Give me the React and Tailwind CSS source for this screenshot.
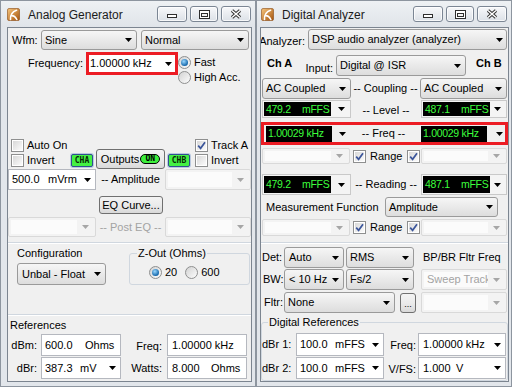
import React from "react";

const Arrow = ({ gray }) => (
  <svg width="7" height="4" viewBox="0 0 7 4" className="shrink-0">
    <path d="M0 0H7L3.5 4Z" fill={gray ? "#a6a6a6" : "#000"} />
  </svg>
);

// gray dropdown-list combo (Win7 look)
function Combo({ className = "", children, pad = "pl-[3px]", arrowGap = "mr-[4px]" }) {
  return (
    <div
      className={`flex items-center shrink-0 border border-[#9a9a9a] rounded-[3px] bg-linear-to-b from-[#f6f6f6] to-[#dddddd] ${className}`}
    >
      <div className={`flex-1 whitespace-pre overflow-hidden ${pad}`}>{children}</div>
      <span className={arrowGap}>
        <Arrow />
      </span>
    </div>
  );
}

// white edit field, optional dropdown arrow
function Field({ className = "", children, arrow }) {
  return (
    <div className={`flex items-center shrink-0 h-full border border-[#b5b8bf] bg-white pl-[3px] ${className}`}>
      <div className="flex-1 flex whitespace-pre overflow-hidden">{children}</div>
      {arrow && (
        <span className="mr-[4px]">
          <Arrow />
        </span>
      )}
    </div>
  );
}

function Dis({ className = "", children }) {
  return (
    <div className={`flex items-stretch shrink-0 border border-[#d9d9d9] bg-[#f3f3f3] rounded-[2px] p-[2px] ${className}`}>
      <div className="flex-1 bg-[#fbfbfb] text-[#a3a3a3] pl-[3px] flex items-center whitespace-pre overflow-hidden">
        {children}
      </div>
      <span className="w-[16px] flex items-center justify-center">
        <Arrow gray />
      </span>
    </div>
  );
}

function Lcd({ v, u, className = "" }) {
  return (
    <div
      className={`bg-black text-[#3dff3d] text-[10.5px] flex items-center pl-[2px] whitespace-pre shrink-0 overflow-hidden tracking-[-0.3px] ${className}`}
    >
      {u !== undefined ? (
        <>
          <span className="w-[36px]">{v}</span>
          <span>{u}</span>
        </>
      ) : (
        v
      )}
    </div>
  );
}

function LcdCombo({ v, u, className = "" }) {
  return (
    <div className={`flex items-stretch shrink-0 border border-[#c9c9c9] bg-[#f4f4f4] p-[1px] ${className}`}>
      <Lcd v={v} u={u} className="w-[67px]" />
      <span className="ml-auto mr-[4px] flex items-center">
        <Arrow />
      </span>
    </div>
  );
}

function Check({ checked, className = "" }) {
  return (
    <span className={`w-[13px] h-[13px] shrink-0 border border-[#8e8f8f] bg-white p-[1px] flex ${className}`}>
      <span className="flex-1 bg-linear-to-br from-[#d8d8d8] to-[#fbfbfb] flex items-center justify-center">
        {checked && (
          <svg width="9" height="9" viewBox="0 0 9 9">
            <path d="M1.2 4.6L3.6 7.3L8 1.3" fill="none" stroke="#3b559a" strokeWidth="1.7" />
          </svg>
        )}
      </span>
    </span>
  );
}

function Radio({ checked, label, className = "" }) {
  return (
    <div className={`flex items-center ${className}`}>
      <span className="w-[13px] h-[13px] shrink-0 rounded-full border border-[#8e8f8f] bg-linear-to-br from-[#d2d2d2] to-[#fdfdfd] flex items-center justify-center">
        {checked && (
          <span className="w-[7px] h-[7px] rounded-full bg-[radial-gradient(circle_at_40%_35%,#9ad8ff,#0b5fa5_75%)]" />
        )}
      </span>
      <span className="ml-[3px]">{label}</span>
    </div>
  );
}

function Btn({ className = "", children }) {
  return (
    <div
      className={`flex items-center justify-center shrink-0 border border-[#707070] rounded-[3px] bg-linear-to-b from-[#f3f3f3] via-[#ebebeb] to-[#d9d9d9] ${className}`}
    >
      {children}
    </div>
  );
}

function Badge({ children, className = "" }) {
  return (
    <span
      className={`w-[22px] h-[13px] shrink-0 border border-[#2f4f8f] rounded-[2px] bg-[#44f044] flex items-center justify-center text-[8px] leading-none font-bold font-['DejaVu_Sans_Mono',monospace] text-[#062806] shadow-[0_0_0_1px_#b9c8e0] ${className}`}
    >
      {children}
    </span>
  );
}

const AppIcon = () => (
  <svg width="13" height="13" viewBox="0 0 13 13" className="shrink-0">
    <defs>
      <linearGradient id="appg" x1="0" y1="0" x2="1" y2="1">
        <stop offset="0" stopColor="#f8c77e" />
        <stop offset="1" stopColor="#a4520c" />
      </linearGradient>
    </defs>
    <rect x="0.5" y="0.5" width="12" height="12" rx="1.5" fill="url(#appg)" stroke="#8a4a10" strokeWidth="0.6" />
    <path d="M3.5 11.5C3.2 7 4.5 4 9.5 2.2M4.5 7.6C6.8 7.6 8.6 9 9.8 11.5" stroke="#fff" strokeWidth="1.6" fill="none" strokeLinecap="round" />
  </svg>
);

function TBtn({ className = "", children }) {
  return (
    <div
      className={`h-[16px] flex items-center justify-center border border-[#7b8694] rounded-[3px] bg-linear-to-b from-[#f7f8fa] to-[#dce1e7] shadow-[inset_0_0_0_1px_rgba(255,255,255,0.75)] ${className}`}
    >
      {children}
    </div>
  );
}

function TitleBar({ title, pl }) {
  return (
    <div className={`h-[26px] shrink-0 flex items-center pr-[4px] bg-linear-to-b from-[#eef1f4] to-[#e0e4e9] ${pl}`}>
      <AppIcon />
      <span className="ml-[8px] text-[12px] leading-[14px] text-[#1b1b1b] mt-[1px]">{title}</span>
      <div className="ml-auto flex gap-[3px]">
        <TBtn className="w-[30px] items-end pb-[3px]">
          <svg width="10" height="4" viewBox="0 0 10 4">
            <rect x="0.5" y="0.5" width="9" height="3" fill="#fff" stroke="#2e2e2e" />
          </svg>
        </TBtn>
        <TBtn className="w-[28px]">
          <svg width="11" height="9" viewBox="0 0 11 9">
            <rect x="0.5" y="0.5" width="10" height="8" fill="#fff" stroke="#2e2e2e" />
            <rect x="2.5" y="3.5" width="6" height="3" fill="#f3f3f3" stroke="#2e2e2e" />
          </svg>
        </TBtn>
        <TBtn className="w-[30px]">
          <svg width="12" height="10" viewBox="0 0 12 10">
            <path d="M2 1.5L10 8.5M10 1.5L2 8.5" stroke="#2e2e2e" strokeWidth="3.4" />
            <path d="M2 1.5L10 8.5M10 1.5L2 8.5" stroke="#fff" strokeWidth="1.5" />
          </svg>
        </TBtn>
      </div>
    </div>
  );
}

const Sep = ({ className = "" }) => (
  <div className={`shrink-0 border-t border-[#d0d7df] border-b border-b-white ${className}`} />
);

function AnalogGenerator() {
  return (
    <div className="w-[256px] h-full shrink-0 flex flex-col border border-[#8d959f] bg-[#e2e6eb]">
      <TitleBar title="Analog Generator" pl="pl-[6px]" />
      <div className="flex-1 flex flex-col ml-[6px] mr-[3px] mb-[4px] border border-[#7c8590] bg-[#f0f0f0] overflow-hidden">
        {/* Wfm */}
        <div className="flex items-center mt-[2px] h-[20px] pl-[4px]">
          <span className="w-[29px]">Wfm:</span>
          <Combo className="w-[96px] h-[20px]">Sine</Combo>
          <Combo className="w-[108px] h-[20px] ml-[4px]">Normal</Combo>
        </div>

        {/* Frequency */}
        <div className="flex items-start mt-[2px]">
          <span className="w-[75px] h-[23px] flex items-center justify-end">Frequency:</span>
          <div className="ml-[3px] w-[92px] h-[23px] shrink-0 border-[3px] border-[#ec1c24] bg-white flex items-center">
            <span className="flex-1 pl-[1px] whitespace-pre">1.00000 kHz</span>
            <span className="mr-[3px]">
              <Arrow />
            </span>
          </div>
          <div className="flex flex-col pt-[3px]">
            <Radio checked label="Fast" className="h-[15px]" />
            <Radio label="High Acc." className="h-[15px]" />
          </div>
        </div>

        {/* Auto On / Track A */}
        <div className="flex items-center justify-between h-[12px] mt-[54px] pl-[3px] pr-[3px]">
          <div className="flex items-center">
            <Check />
            <span className="ml-[3px]">Auto On</span>
          </div>
          <div className="flex items-center">
            <Check checked />
            <span className="ml-[3px]">Track A</span>
          </div>
        </div>

        {/* Invert / outputs */}
        <div className="flex items-end h-[20px] -mt-[2px]">
          <div className="flex items-center w-[63px] pl-[3px] mb-[2px]">
            <Check />
            <span className="ml-[3px]">Invert</span>
          </div>
          <Badge className="mb-[2px]">CHA</Badge>
          <Btn className="ml-[3px] w-[69px] h-[20px]">
            <span>Outputs</span>
            <span className="ml-[1px] w-[20px] h-[10px] rounded-full border border-black bg-[#3cf03c] text-[8px] leading-none font-bold font-['DejaVu_Sans_Mono',monospace] flex items-center justify-center">
              ON
            </span>
          </Btn>
          <Badge className="ml-[3px] mb-[2px]">CHB</Badge>
          <div className="flex items-center ml-[5px] mb-[2px]">
            <Check />
            <span className="ml-[3px]">Invert</span>
          </div>
        </div>

        {/* Amplitude */}
        <div className="flex items-center h-[21px]">
          <Field arrow className="w-[88px]">
            <span className="w-[36px]">500.0</span>
            <span>mVrm</span>
          </Field>
          <span className="flex-1 text-center">-- Amplitude</span>
          <Dis className="w-[86px] h-full" />
        </div>

        <Btn className="mt-[6px] ml-[91px] w-[64px] h-[18px]">EQ Curve...</Btn>

        <div className="flex items-center h-[20px] mt-[3px]">
          <Dis className="w-[88px] h-full" />
          <span className="flex-1 text-center text-[#a3a3a3]">-- Post EQ --</span>
          <Dis className="w-[86px] h-full" />
        </div>

        <Sep className="mt-[5px]" />

        {/* Configuration / Z-Out */}
        <div className="flex mt-[3px]">
          <div className="flex flex-col pl-[9px]">
            <span className="leading-[13px]">Configuration</span>
            <Combo className="mt-[3px] w-[89px] h-[22px]" pad="pl-[4px]">
              Unbal - Float
            </Combo>
          </div>
          <fieldset className="ml-[23px] w-[121px] h-[38px] border border-[#d0d7df] rounded-[3px]">
            <legend className="ml-[7px] px-[1px] leading-[13px]">Z-Out (Ohms)</legend>
            <div className="flex mt-[6px] pl-[19px]">
              <Radio checked label="20" />
              <Radio label="600" className="ml-[8px]" />
            </div>
          </fieldset>
        </div>

        <Sep className="mt-[29px]" />

        {/* References */}
        <span className="pl-[2px] mt-[3px] leading-[13px]">References</span>
        <div className="flex items-center h-[22px] mt-[2px]">
          <span className="w-[33px] text-right pr-[4px]">dBm:</span>
          <Field className="w-[80px]">
            <span className="w-[40px]">600.0</span>
            <span>Ohms</span>
          </Field>
          <span className="w-[46px] text-right pr-[5px] mt-[2px]">Freq:</span>
          <Field className="w-[80px]">
            <span className="pl-[1px]">1.00000 kHz</span>
          </Field>
        </div>
        <div className="flex items-center h-[22px] mt-[1px]">
          <span className="w-[33px] text-right pr-[4px]">dBr:</span>
          <Field arrow className="w-[80px]">
            <span className="w-[35px]">387.3</span>
            <span>mV</span>
          </Field>
          <span className="w-[46px] text-right pr-[5px]">Watts:</span>
          <Field className="w-[80px]">
            <span className="w-[40px] pl-[1px]">8.000</span>
            <span>Ohms</span>
          </Field>
        </div>
      </div>
    </div>
  );
}

function DigitalAnalyzer() {
  return (
    <div className="w-[256px] h-full shrink-0 flex flex-col border border-[#8d959f] bg-[#e2e6eb]">
      <TitleBar title="Digital Analyzer" pl="pl-[4px]" />
      <div className="flex-1 flex flex-col ml-[3px] mr-[2px] mb-[4px] border border-[#7c8590] bg-[#f0f0f0] overflow-hidden">
        {/* Analyzer */}
        <div className="flex items-center h-[21px] mt-[1px]">
          <span className="w-[47px] shrink-0 text-right pr-[1px] pt-[4px] whitespace-pre -ml-[2px] mr-[2px]">Analyzer:</span>
          <Combo className="w-[199px] h-[21px]" arrowGap="mr-[3px]">
            DSP audio analyzer (analyzer)
          </Combo>
        </div>

        {/* Ch A / Input / Ch B */}
        <div className="flex h-[21px] mt-[5px]">
          <span className="w-[41px] pl-[6px] font-bold leading-[13px] mt-[2px]">Ch A</span>
          <span className="w-[34px] text-right pr-[3px] leading-[13px] mt-[7px]">Input:</span>
          <Combo className="w-[130px] h-[21px]">Digital @ ISR</Combo>
          <span className="ml-[10px] font-bold leading-[13px] mt-[2px]">Ch B</span>
        </div>

        {/* Coupling */}
        <div className="flex items-center h-[21px] mt-[2px] pl-[1px] pr-[1px]">
          <Combo className="w-[89px] h-[21px]">AC Coupled</Combo>
          <span className="flex-1 text-center">-- Coupling --</span>
          <Combo className="w-[87px] h-[21px]">AC Coupled</Combo>
        </div>

        {/* Level */}
        <div className="flex items-center h-[18px] mt-[1px] pl-[1px] pr-[1px]">
          <LcdCombo v="479.2" u="mFFS" className="w-[89px] h-full" />
          <span className="flex-1 text-center pt-[3px]">-- Level --</span>
          <LcdCombo v="487.1" u="mFFS" className="w-[86px] h-full" />
        </div>

        {/* Freq (highlighted) */}
        <div className="mt-[4px] h-[23px] shrink-0 border-[3px] border-[#ec1c24] flex items-center pl-[2px] pr-[1px]">
          <Lcd v="1.00029 kHz" className="w-[66px] h-[16px] pl-[1px]" />
          <span className="ml-[7px]">
            <Arrow />
          </span>
          <span className="flex-1 text-center">-- Freq --</span>
          <Lcd v="1.00029 kHz" className="w-[66px] h-[16px] pl-[1px]" />
          <span className="ml-[9px] mr-[1px]">
            <Arrow />
          </span>
        </div>

        {/* Range */}
        <div className="flex items-center h-[16px] mt-[3px] pl-[1px] pr-[1px]">
          <Dis className="w-[88px] h-full" />
          <Check checked className="ml-[3px]" />
          <span className="ml-[4px]">Range</span>
          <Check checked className="ml-[5px]" />
          <Dis className="w-[86px] h-full ml-auto" />
        </div>

        {/* Reading */}
        <div className="flex items-center h-[21px] mt-[10px] pl-[1px] pr-[1px]">
          <LcdCombo v="479.2" u="mFFS" className="w-[89px] h-full" />
          <span className="flex-1 text-center">-- Reading --</span>
          <LcdCombo v="487.1" u="mFFS" className="w-[86px] h-full" />
        </div>

        {/* Measurement Function */}
        <div className="flex items-center h-[20px] mt-[2px]">
          <span className="pl-[5px]">Measurement Function</span>
          <Combo className="w-[113px] h-[20px] ml-auto mr-[10px]">Amplitude</Combo>
        </div>

        <div className="flex items-center h-[17px] mt-[2px] pl-[1px] pr-[1px]">
          <Dis className="w-[88px] h-full" />
          <Check checked className="ml-[3px]" />
          <span className="ml-[4px]">Range</span>
          <Check checked className="ml-[5px]" />
          <Dis className="w-[86px] h-full ml-auto" />
        </div>

        <Sep className="mt-[6px]" />

        {/* Det */}
        <div className="flex items-center h-[21px] mt-[3px] pr-[1px]">
          <span className="w-[23px] pl-[1px]">Det:</span>
          <Combo className="w-[60px] h-[21px]" pad="pl-[4px]">Auto</Combo>
          <Combo className="w-[68px] h-[21px] ml-[2px]">RMS</Combo>
          <span className="ml-[9px] pb-[1px]">BP/BR Fltr Freq</span>
        </div>
        <div className="flex items-center h-[21px] mt-[1px] pr-[1px]">
          <span className="w-[23px] pl-[2px]">BW:</span>
          <Combo className="w-[60px] h-[21px]" pad="pl-[4px]">{"< 10 Hz"}</Combo>
          <Combo className="w-[68px] h-[21px] ml-[2px]">Fs/2</Combo>
          <Dis className="w-[86px] h-full ml-auto">Sweep Track</Dis>
        </div>
        <div className="flex items-center h-[21px] mt-[2px] pr-[1px]">
          <span className="w-[23px] pl-[3px]">Fltr:</span>
          <Combo className="w-[111px] h-[21px]">None</Combo>
          <Btn className="ml-[5px] w-[16px] h-[20px] items-end pb-[3px] text-[9px] leading-none">...</Btn>
          <Dis className="w-[86px] h-full ml-auto" />
        </div>

        {/* Digital References */}
        <fieldset className="flex-1 mt-[3px] border border-[#d0d7df] rounded-[3px]">
          <legend className="ml-[6px] px-[1px] leading-[13px]">Digital References</legend>
          <div className="flex items-center h-[23px] mt-[4px]">
            <span className="w-[34px] whitespace-pre">dBr 1:</span>
            <Field arrow className="w-[88px]">
              <span className="w-[35px]">100.0</span>
              <span>mFFS</span>
            </Field>
            <span className="w-[34px] text-right pr-[2px] mt-[2px]">Freq:</span>
            <Field arrow className="w-[88px]">
              <span className="pl-[1px]">1.00000 kHz</span>
            </Field>
          </div>
          <div className="flex items-center h-[22px] mt-[1px]">
            <span className="w-[34px] whitespace-pre">dBr 2:</span>
            <Field arrow className="w-[88px]">
              <span className="w-[35px]">100.0</span>
              <span>mFFS</span>
            </Field>
            <span className="w-[34px] text-right pr-[2px] mt-[2px]">V/FS:</span>
            <Field arrow className="w-[88px]">
              <span className="w-[34px] pl-[1px]">1.000</span>
              <span>V</span>
            </Field>
          </div>
        </fieldset>
      </div>
    </div>
  );
}

export default function App() {
  return (
    <div className="w-[512px] h-[387px] flex overflow-hidden bg-[#e2e6eb] text-black text-[11px] leading-[13px] font-['Liberation_Sans',Arial,sans-serif]">
      <AnalogGenerator />
      <DigitalAnalyzer />
    </div>
  );
}
